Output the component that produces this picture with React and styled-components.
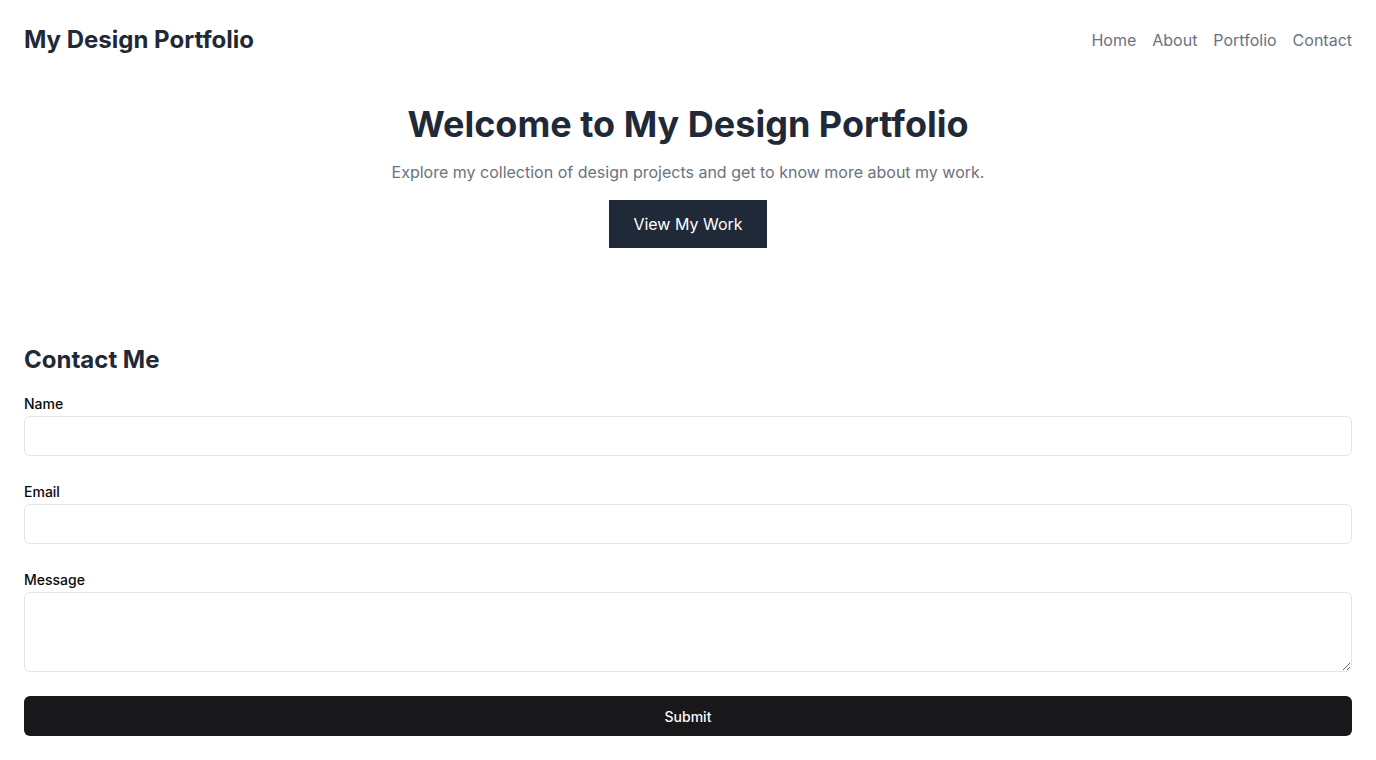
import React from 'react';
import styled, { createGlobalStyle } from 'styled-components';

const GlobalStyle = createGlobalStyle`
  * { box-sizing: border-box; }
  body {
    margin: 0;
    background: #ffffff;
    font-family: Inter, "Noto Sans", "Liberation Sans", sans-serif;
    color: #1f2937;
  }
`;

const Page = styled.div`
  min-height: 100vh;
  padding: 0 24px 24px;
`;

const Header = styled.header`
  height: 80px;
  display: flex;
  align-items: center;
  justify-content: space-between;
`;

const Brand = styled.h1`
  margin: 0;
  font-size: 24px;
  line-height: 32px;
  font-weight: 700;
  color: #1f2937;
`;

const Nav = styled.nav`
  display: flex;
  gap: 16px;
`;

const NavLink = styled.a`
  font-size: 16px;
  line-height: 24px;
  color: #6b7280;
  text-decoration: none;
`;

const Hero = styled.section`
  display: flex;
  flex-direction: column;
  align-items: center;
  text-align: center;
  padding: 24px 0 96px;
`;

const HeroTitle = styled.h2`
  margin: 0 0 16px;
  font-size: 36px;
  line-height: 40px;
  font-weight: 700;
  color: #1f2937;
`;

const HeroSubtitle = styled.p`
  margin: 0 0 16px;
  font-size: 16px;
  line-height: 24px;
  color: #6b7280;
`;

const PrimaryButton = styled.button`
  border: none;
  background: #1f2937;
  color: #ffffff;
  font-family: inherit;
  font-size: 16px;
  line-height: 24px;
  padding: 12px 24px;
  cursor: pointer;
`;

const Contact = styled.section``;

const SectionTitle = styled.h2`
  margin: 0 0 20px;
  font-size: 24px;
  line-height: 32px;
  font-weight: 700;
  color: #1f2937;
`;

const Form = styled.form`
  display: flex;
  flex-direction: column;
  gap: 28px;
`;

const Field = styled.div`
  display: flex;
  flex-direction: column;
  gap: 4px;
`;

const Label = styled.label`
  font-size: 14px;
  line-height: 16px;
  font-weight: 500;
  color: #09090b;
`;

const Input = styled.input`
  height: 40px;
  width: 100%;
  border: 1px solid #e4e4e7;
  border-radius: 6px;
  padding: 8px 12px;
  font-family: inherit;
  font-size: 14px;
  background: #ffffff;
`;

const TextArea = styled.textarea`
  height: 80px;
  width: 100%;
  border: 1px solid #e4e4e7;
  border-radius: 6px;
  padding: 8px 12px;
  font-family: inherit;
  font-size: 14px;
  display: block;
`;

const SubmitButton = styled.button`
  margin-top: -4px;
  height: 40px;
  width: 100%;
  border: none;
  border-radius: 6px;
  background: #18181b;
  color: #fafafa;
  font-family: inherit;
  font-size: 14px;
  font-weight: 500;
  cursor: pointer;
`;

const navItems = ['Home', 'About', 'Portfolio', 'Contact'];

const App = () => {
  return (
    <Page>
      <GlobalStyle />
      <Header>
        <Brand>My Design Portfolio</Brand>
        <Nav>
          {navItems.map(item => (
            <NavLink key={item} href="#">{item}</NavLink>
          ))}
        </Nav>
      </Header>

      <Hero>
        <HeroTitle>Welcome to My Design Portfolio</HeroTitle>
        <HeroSubtitle>Explore my collection of design projects and get to know more about my work.</HeroSubtitle>
        <PrimaryButton>View My Work</PrimaryButton>
      </Hero>

      <Contact>
        <SectionTitle>Contact Me</SectionTitle>
        <Form onSubmit={e => e.preventDefault()}>
          <Field>
            <Label htmlFor="name">Name</Label>
            <Input id="name" type="text" />
          </Field>
          <Field>
            <Label htmlFor="email">Email</Label>
            <Input id="email" type="email" />
          </Field>
          <Field>
            <Label htmlFor="message">Message</Label>
            <TextArea id="message" />
          </Field>
          <SubmitButton type="submit">Submit</SubmitButton>
        </Form>
      </Contact>
    </Page>
  );
};

export default App;
